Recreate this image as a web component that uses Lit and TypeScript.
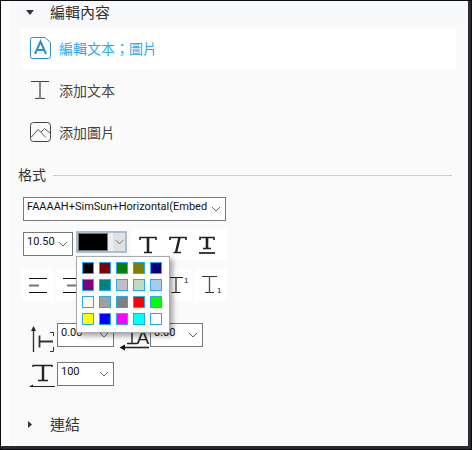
import { LitElement, html, css, svg } from "lit";
import { customElement } from "lit/decorators.js";

const COLORS = [
  "#000000", "#800000", "#008000", "#808000", "#000080",
  "#800080", "#008080", "#c0c0c0", "#c0dcc0", "#a6caf0",
  "#fffbf0", "#a0a0a4", "#808080", "#ff0000", "#00ff00",
  "#ffff00", "#0000ff", "#ff00ff", "#00ffff", "#ffffff",
];

const chevron = html`<svg class="chev" width="10" height="6" viewBox="0 0 10 6"><polyline points="1,1 5,5 9,1" fill="none" stroke="#666" stroke-width="1"/></svg>`;

const select = (label: string, cls: string) => html`<div class="select ${cls}"><span class="val">${label}</span>${chevron}</div>`;

const boldT = svg`<path d="M1 4V1.5H17V4M5 16.5H13" fill="none" stroke="#222" stroke-width="1.6"/><path d="M9 1.5V16" stroke="#222" stroke-width="2.6"/>`;
const italicT = svg`<path d="M1 4V1.5H17V4M4.5 16.5H12" fill="none" stroke="#222" stroke-width="1.6"/><path d="M10.5 1.5L7 16.5" stroke="#222" stroke-width="2.4"/>`;
const underT = svg`<path d="M1 4V1.5H15V4M4 12.5H12" fill="none" stroke="#222" stroke-width="1.6"/><path d="M8 1.5V12" stroke="#222" stroke-width="2.6"/><path d="M0 17H16" stroke="#111" stroke-width="1.6"/>`;

const align = (mx1: number, mx2: number) => html`<svg width="18" height="15" viewBox="0 0 18 15"><path d="M0 .5H18M0 14.5H18" stroke="#111" stroke-width="1"/><path d="M${mx1} 7.5H${mx2}" stroke="#777" stroke-width="2"/></svg>`;

@customElement("app-root")
export class AppRoot extends LitElement {
  static styles = css`
    :host { display: block; width: 472px; height: 450px; overflow: hidden;
      font-family: "Noto Sans CJK TC", "Liberation Sans", sans-serif; color: #333; }
    .frame { box-sizing: border-box; width: 472px; height: 450px; border: 1px solid #0c0c10; background: #0c0c10; }
    .inner { box-sizing: border-box; height: 100%; border-right: 3px solid #2a2b35; border-bottom: 3px solid #2a2b35; background: #fefefe; padding-left: 8px; }
    .content { background: #fafafa; height: 100%; display: flex; flex-direction: column; }
    .head { box-sizing: border-box; height: 25px; flex: none; display: flex; align-items: center; padding: 0 0 3px 17px; font-size: 15px; line-height: 22px; color: #333; }
    .head.top { background: #f8f9fb; }
    .head svg { flex: none; }
    .head .tw { width: 24px; flex: none; display: flex; }
    .head .nudge { display: flex; margin-left: 2px; }
    .list { display: flex; flex-direction: column; gap: 2px; margin: 3px 12px 0; }
    .item { box-sizing: border-box; height: 40px; display: flex; align-items: center; padding: 0 0 2px 9px; font-size: 14px; color: #444; }
    .item svg { width: 22px; height: 24px; flex: none; margin-right: 7px; }
    .item.active { background: #fff; color: #29a9f0; }
    .fmt { display: flex; align-items: center; gap: 7px; margin: 12px 16px 0 9px; height: 20px; font-size: 14px; line-height: 20px; color: #333; }
    .fmt span { margin-bottom: 2px; }
    .fmt i { flex: 1; height: 1px; background: #ccc; }
    .select { box-sizing: border-box; height: 24px; border: 1px solid #777; background: #fff; display: flex; align-items: center; justify-content: space-between;
      padding: 0 4px 0 3px; font: 11px/20px Roboto, "Liberation Sans", sans-serif; color: #111; flex: none; }
    .val { overflow: hidden; white-space: nowrap; min-width: 0; padding-bottom: 4px; }
    .chev { flex: none; }
    .w-font { width: 203px; margin: 12px 0 0 14px; }
    .w-font .val { width: 180px; }
    .w-size { width: 50px; margin-top: 3px; }
    .w-a { width: 57px; }
    .w-b { width: 53px; }
    .row2 { display: flex; gap: 3px; margin: 8px 0 0 14px; align-items: flex-start; height: 31px; }
    .picker { position: relative; box-sizing: border-box; width: 51px; height: 22px; margin-top: 2px; border: 2px solid #a8bfd0; display: flex; background: #e8eef3; flex: none; }
    .swatch { box-sizing: border-box; width: 30px; height: 18px; background: #000; border: 1px solid #777; flex: none; }
    .dd { width: 12px; height: 18px; margin-left: 5px; background: #e1e1e1; display: flex; align-items: center; justify-content: center; flex: none; }
    .dd .chev { width: 9px; }
    .pop { position: absolute; z-index: 2; left: -2px; top: 23px; box-sizing: border-box; width: 94px; height: 77px; background: #fff; border: 1px solid #aaa;
      box-shadow: 3px 3px 5px rgba(0,0,0,.35); padding: 5px 0 0 5px; display: grid; grid-template-columns: repeat(5, 12px); grid-auto-rows: 12px; gap: 5px; }
    .cell { box-sizing: border-box; border: 1px solid #2aa9f0; }
    .panel { margin-left: 1px; width: 96px; height: 31px; background: #fff; display: flex; align-items: center; gap: 12px; padding-left: 8px; box-sizing: border-box; flex: none; }
    .panel svg { flex: none; }
    .row3 { display: flex; justify-content: space-between; margin: 9px 0 0 12px; width: 206px; height: 32px; }
    .btn { width: 33px; height: 32px; background: #fff; display: flex; align-items: center; justify-content: center; flex: none; }
    .row4 { display: flex; align-items: flex-start; margin: 22px 0 0 20px; height: 30px; }
    .row5 { display: flex; align-items: flex-start; margin: 9px 0 0 20px; height: 26px; }
    .row4 svg, .row5 svg { flex: none; display: block; }
    .head.link { margin-top: 25px; }
  `;

  render() {
    return html`<div class="frame"><div class="inner"><div class="content">
      <div class="head top"><span class="tw"><svg width="8" height="5" viewBox="0 0 8 5"><path d="M0 0H8L4 5Z" fill="#333"/></svg></span>編輯內容</div>
      <div class="list">
        <div class="item active">
          <svg viewBox="0 0 22 24"><path d="M2.5 1.5H15L20.5 6.5V20.5a2 2 0 0 1-2 2H2.5a2 2 0 0 1-2-2V3.5a2 2 0 0 1 2-2Z" fill="none" stroke="#2a8fd0"/><path d="M5 18L10.5 5.5L16 18M7 14H14" fill="none" stroke="#2a8fd0" stroke-width="2"/></svg>
          編輯文本；圖片
        </div>
        <div class="item">
          <svg viewBox="0 0 22 24"><path d="M1 3.5H19M5 20.5H15" stroke="#444" stroke-width="1" fill="none"/><path d="M10 3.5V20.5" stroke="#888" stroke-width="2"/></svg>
          添加文本
        </div>
        <div class="item">
          <svg viewBox="0 0 22 24"><rect x=".5" y="2.5" width="20" height="19" rx="3" fill="none" stroke="#444"/><path d="M1 17.5L8 9.5L16 17.5M11 12L14.5 8.5L20 13" fill="none" stroke="#555"/></svg>
          添加圖片
        </div>
      </div>
      <div class="fmt"><span>格式</span><i></i></div>
      ${select("FAAAAH+SimSun+Horizontal(Embedded)", "w-font")}
      <div class="row2">
        ${select("10.50", "w-size")}
        <div class="picker">
          <div class="swatch"></div>
          <div class="dd">${chevron}</div>
          <div class="pop">${COLORS.map((c) => html`<div class="cell" style="background:${c}"></div>`)}</div>
        </div>
        <div class="panel">
          <svg width="18" height="18" viewBox="0 0 18 18">${boldT}</svg>
          <svg width="18" height="18" viewBox="0 0 18 18">${italicT}</svg>
          <svg width="16" height="18" viewBox="0 0 16 18">${underT}</svg>
        </div>
      </div>
      <div class="row3">
        <div class="btn">${align(0, 10)}</div>
        <div class="btn">${align(4, 14)}</div>
        <div class="btn">${align(8, 18)}</div>
        <div class="btn">${align(0, 18)}</div>
        <div class="btn"><svg width="33" height="18" viewBox="0 0 33 18"><path d="M10 1.5H24M12.5 16.5H21.5" stroke="#222" fill="none"/><path d="M17 1.5V16.5" stroke="#444" stroke-width="1.4"/><text x="25" y="7" font-size="8" font-family="Liberation Sans" fill="#222">1</text></svg></div>
        <div class="btn"><svg width="33" height="18" viewBox="0 0 33 18"><path d="M8 .5H23M11 16.5H20" stroke="#333" fill="none"/><path d="M15.5 .5V16.5" stroke="#555" stroke-width="1.4"/><text x="23" y="17" font-size="8" font-family="Liberation Sans" fill="#222">1</text></svg></div>
      </div>
      <div class="row4">
        <svg width="28" height="30" viewBox="0 0 28 30"><path d="M4.5 6V29" stroke="#333" stroke-width="1.4"/><path d="M4.5 3L2 8H7Z" fill="#222"/><path d="M10.5 12.5V24.5M10.5 18.5H24" stroke="#333" stroke-width="1.8" fill="none"/><path d="M21 9.5H24.5V13M24.5 24V28.5H21" stroke="#333" fill="none"/></svg>
        ${select("0.00", "w-a")}
        <svg width="36" height="30" viewBox="0 0 36 30"><path d="M13 20.5H23M18 2V20" stroke="#222" stroke-width="1.4" fill="none"/><text x="22.5" y="20.5" font-size="19" font-family="Liberation Sans" fill="#222">A</text><path d="M10 24.5H35" stroke="#222" stroke-width="1.6"/><path d="M5.5 24.5L11 21.5V27.5Z" fill="#111"/></svg>
        ${select("0.00", "w-b")}
      </div>
      <div class="row5">
        <svg width="28" height="26" viewBox="0 0 28 26"><path d="M4 5V3.5H23V5M9 18.5H19" stroke="#222" stroke-width="1.4" fill="none"/><path d="M14 3.5V18.5" stroke="#222" stroke-width="2.4"/><path d="M1 24.5H26" stroke="#222"/><path d="M0 24.8L4 22.5V25Z" fill="#111"/></svg>
        ${select("100", "w-a")}
      </div>
      <div class="head link"><span class="tw"><span class="nudge"><svg width="4" height="7" viewBox="0 0 4 7"><path d="M0 0L4 3.5L0 7Z" fill="#333"/></svg></span></span>連結</div>
    </div></div></div>`;
  }
}
